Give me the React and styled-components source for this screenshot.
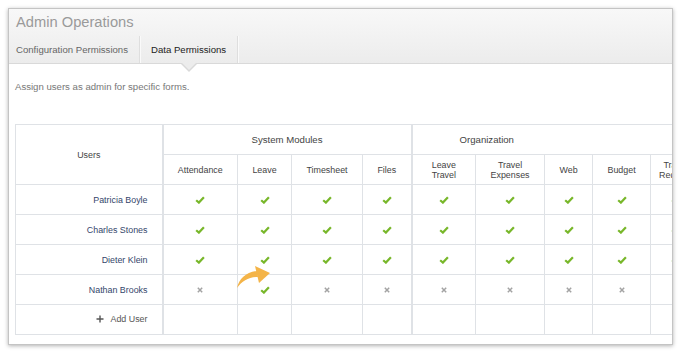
import React from 'react';
import styled, { createGlobalStyle } from 'styled-components';

const GlobalStyle = createGlobalStyle`
    body {
        margin: 0;
        background: #fff;
        font-family: "Liberation Sans", Arial, sans-serif;
    }
`;

const Page = styled.div`
    padding: 8px;
`;

const Panel = styled.section`
    box-sizing: border-box;
    width: 665px;
    border: 1px solid #c4c4c4;
    box-shadow: 0 1px 4px rgba(0, 0, 0, 0.3);
    background: #fff;
    overflow: hidden;
`;

const Header = styled.header`
    background: linear-gradient(#f8f8f8, #ececec);
    border-bottom: 1px solid #d9d9d9;
`;

const Title = styled.h1`
    margin: 0;
    padding: 0 7px;
    height: 27px;
    line-height: 27px;
    font-size: 14.7px;
    font-weight: normal;
    color: #9a9a9a;
`;

const TabBar = styled.nav`
    display: flex;
    height: 27px;
`;

const Tab = styled.div`
    position: relative;
    display: flex;
    align-items: center;
    padding: 0 11px;
    font-size: 9.6px;
    color: ${p => (p.$active ? '#222' : '#666')};
    border-right: 1px solid #dedede;
    box-shadow: 1px 0 0 #fafafa;

    &:first-child {
        padding-left: 7px;
    }

    ${p => p.$active && `
        &::before, &::after {
            content: '';
            position: absolute;
            left: 50%;
            width: 0;
            height: 0;
            border-style: solid;
            border-color: transparent;
        }
        &::before {
            bottom: -9px;
            margin-left: -8px;
            border-width: 8px 8px 0 8px;
            border-top-color: #d9d9d9;
        }
        &::after {
            bottom: -7px;
            margin-left: -7px;
            border-width: 7px 7px 0 7px;
            border-top-color: #ececec;
            z-index: 1;
        }
    `}
`;

const Content = styled.div`
    padding: 17px 0 9px 6px;
`;

const Description = styled.p`
    margin: 0 0 31px;
    font-size: 9.6px;
    line-height: 12px;
    color: #777;
`;

const Table = styled.table`
    border-collapse: collapse;
    table-layout: fixed;
    width: 685px;
    font-size: 8.9px;
`;

const HeadCell = styled.th`
    height: 29px;
    padding: 0 3px;
    border: 1px solid #dfe2e6;
    border-right-width: ${p => (p.$divider ? '2px' : '1px')};
    font-weight: normal;
    font-size: ${p => (p.$group ? '9.6px' : '8.9px')};
    color: #444;
    line-height: 10px;
    text-align: ${p => (p.$align === 'left' ? 'left' : 'center')};
    padding-left: ${p => (p.$align === 'left' ? '47px' : '3px')};
`;

const Row = styled.tr`
    height: 30px;
`;

const NameCell = styled.td`
    padding: 0 14px 0 0;
    border: 1px solid #dfe2e6;
    border-right-width: 2px;
    text-align: right;
    color: ${p => (p.$muted ? '#555' : '#34466b')};
`;

const Cell = styled.td`
    position: relative;
    padding: 0;
    border: 1px solid #dfe2e6;
    border-right-width: ${p => (p.$divider ? '2px' : '1px')};
    text-align: center;
    line-height: 0;
`;

const AddLabel = styled.span`
    display: inline-flex;
    align-items: center;
    gap: 7px;
`;

const ArrowMark = styled.svg`
    position: absolute;
    left: -3px;
    top: -11px;
    pointer-events: none;
`;

const columns = [
    { label: 'Attendance', width: 75 },
    { label: 'Leave', width: 54 },
    { label: 'Timesheet', width: 71 },
    { label: 'Files', width: 49, divider: true },
    { label: ['Leave', 'Travel'], width: 64 },
    { label: ['Travel', 'Expenses'], width: 69 },
    { label: 'Web', width: 48 },
    { label: 'Budget', width: 58 },
    { label: ['Travel', 'Request'], width: 50 },
];

const users = [
    { name: 'Patricia Boyle', access: [1, 1, 1, 1, 1, 1, 1, 1, 1] },
    { name: 'Charles Stones', access: [1, 1, 1, 1, 1, 1, 1, 1, 1] },
    { name: 'Dieter Klein', access: [1, 1, 1, 1, 1, 1, 1, 1, 1] },
    { name: 'Nathan Brooks', access: [0, 1, 0, 0, 0, 0, 0, 0, 0], highlight: 1 },
];

function Check() {
    return (
        <svg width="10" height="8" viewBox="0 0 10 8">
            <path d="M1.2 4.2 L3.9 6.6 L8.9 1.3" fill="none" stroke="#78b72a" strokeWidth="2.2" />
        </svg>
    );
}

function Cross() {
    return (
        <svg width="6" height="6" viewBox="0 0 6 6">
            <path d="M0.8 0.8 L5.2 5.2 M5.2 0.8 L0.8 5.2" stroke="#a3a3a3" strokeWidth="1.5" />
        </svg>
    );
}

function Plus() {
    return (
        <svg width="8" height="8" viewBox="0 0 8 8">
            <path d="M4 0.5 V7.5 M0.5 4 H7.5" stroke="#555" strokeWidth="1.4" />
        </svg>
    );
}

function CurvedArrow() {
    return (
        <ArrowMark width="38" height="26" viewBox="0 0 38 26">
            <path d="M2 24 C4 15 11 8 22 7 L23 13 C14 13 7 17 2 24 Z" fill="#f4b448" />
            <path d="M20 2 L35 9 L24 19 Z" fill="#f4b448" />
        </ArrowMark>
    );
}

function ColumnLabel({ label }) {
    if (Array.isArray(label)) {
        return <>{label[0]}<br />{label[1]}</>;
    }
    return label;
}

function App() {
    return (
        <Page>
            <GlobalStyle />
            <Panel>
                <Header>
                    <Title>Admin Operations</Title>
                    <TabBar>
                        <Tab>Configuration Permissions</Tab>
                        <Tab $active>Data Permissions</Tab>
                    </TabBar>
                </Header>
                <Content>
                    <Description>Assign users as admin for specific forms.</Description>
                    <Table>
                        <colgroup>
                            <col style={{ width: 147 }} />
                            {columns.map((c, i) => <col key={i} style={{ width: c.width }} />)}
                        </colgroup>
                        <thead>
                            <tr>
                                <HeadCell rowSpan={2} $divider>Users</HeadCell>
                                <HeadCell colSpan={4} $divider $group>System Modules</HeadCell>
                                <HeadCell colSpan={5} $group $align="left">Organization</HeadCell>
                            </tr>
                            <tr>
                                {columns.map((c, i) => (
                                    <HeadCell key={i} $divider={c.divider}>
                                        <ColumnLabel label={c.label} />
                                    </HeadCell>
                                ))}
                            </tr>
                        </thead>
                        <tbody>
                            {users.map(u => (
                                <Row key={u.name}>
                                    <NameCell>{u.name}</NameCell>
                                    {u.access.map((a, i) => (
                                        <Cell key={i} $divider={columns[i].divider}>
                                            {u.highlight === i && <CurvedArrow />}
                                            {a ? <Check /> : <Cross />}
                                        </Cell>
                                    ))}
                                </Row>
                            ))}
                            <Row>
                                <NameCell $muted>
                                    <AddLabel><Plus />Add User</AddLabel>
                                </NameCell>
                                {columns.map((c, i) => <Cell key={i} $divider={c.divider} />)}
                            </Row>
                        </tbody>
                    </Table>
                </Content>
            </Panel>
        </Page>
    );
}

export default App;
